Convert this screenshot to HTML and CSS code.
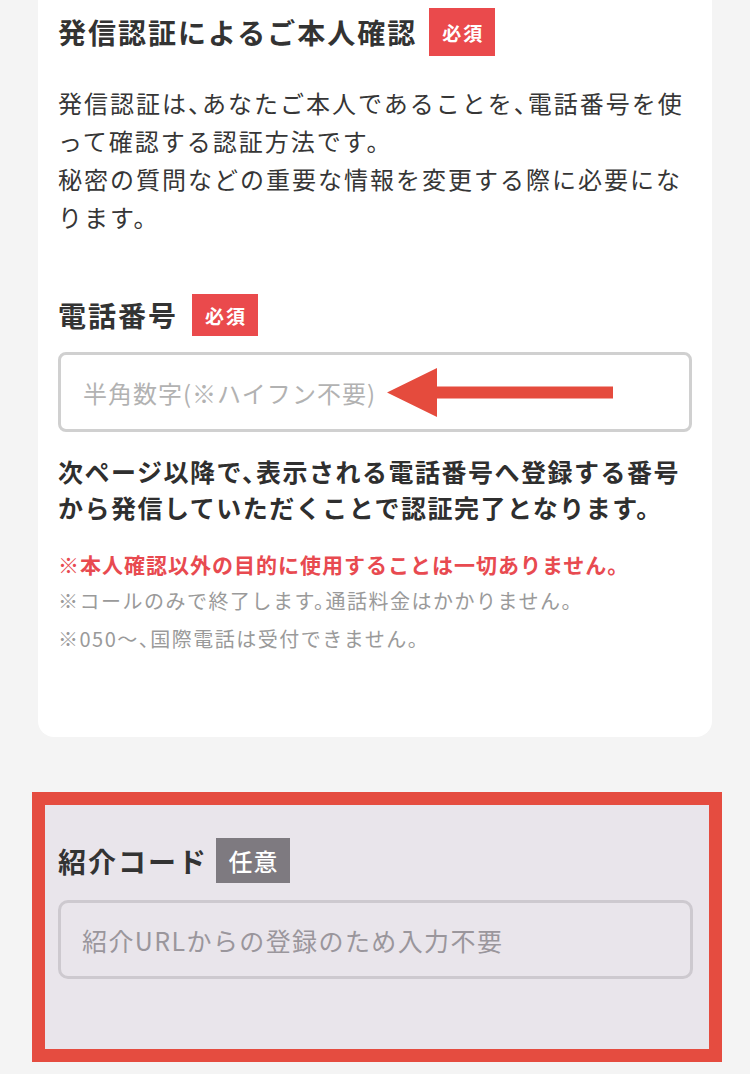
FILE: index.html
```html
<!DOCTYPE html>
<html lang="ja">
<head>
<meta charset="utf-8">
<title>発信認証</title>
<link rel="stylesheet" href="styles.css">
</head>
<body>
<main class="page">
  <section class="card">
    <div class="label-row label-row--top">
      <h2 class="label">発信認証によるご本人確認</h2>
      <span class="badge badge--req badge--tall">必須</span>
    </div>
    <p class="lead">発信認証は、あなたご本人であることを、電話番号を使って確認する認証方法です。<br>秘密の質問などの重要な情報を変更する際に必要になります。</p>

    <div class="label-row label-row--phone">
      <h3 class="label">電話番号</h3>
      <span class="badge badge--req">必須</span>
    </div>
    <div class="field">
      <input class="input input--phone" type="tel" placeholder="半角数字(※ハイフン不要)">
      <svg class="arrow" width="226" height="50" viewBox="0 0 226 50" aria-hidden="true">
        <polygon points="0,24.5 50,0 50,18.5 226,18.5 226,30.5 50,30.5 50,49" fill="#e54b3d"/>
      </svg>
    </div>
    <p class="notice">次ページ以降で、表示される電話番号へ登録する番号から発信していただくことで認証完了となります。</p>
    <ul class="notes">
      <li class="note note--red">※本人確認以外の目的に使用することは一切ありません。</li>
      <li class="note">※コールのみで終了します。通話料金はかかりません。</li>
      <li class="note">※050〜、国際電話は受付できません。</li>
    </ul>
  </section>

  <section class="referral">
    <div class="label-row label-row--ref">
      <h3 class="label">紹介コード</h3>
      <span class="badge badge--opt">任意</span>
    </div>
    <input class="input input--ref" type="text" placeholder="紹介URLからの登録のため入力不要">
  </section>
</main>
</body>
</html>
```

FILE: styles.css
```css
* {
  box-sizing: border-box;
}

html, body {
  margin: 0;
  padding: 0;
}

body {
  background: #f4f4f4;
  font-family: "Noto Sans CJK JP", "Noto Sans", sans-serif;
  color: #333;
  width: 750px;
  height: 1074px;
  overflow: hidden;
}

.page {
  display: flex;
  flex-direction: column;
}

.card {
  margin: 0 38px;
  background: #ffffff;
  border-radius: 0 0 16px 16px;
  padding: 8px 20px 79px 20px;
}

.label-row {
  display: flex;
  align-items: center;
  gap: 12px;
}

.label-row--phone {
  margin-top: 58px;
  gap: 14px;
}

.label {
  margin: 0;
  font-size: 28px;
  font-weight: 700;
  letter-spacing: 2px;
  line-height: 40px;
  color: #333;
}

.badge {
  display: inline-flex;
  align-items: center;
  justify-content: center;
  color: #fff;
  font-weight: 700;
}

.badge--req {
  background: #ea4a4c;
  width: 66px;
  height: 42px;
  font-size: 19px;
  letter-spacing: 2px;
  padding-left: 2px;
}

.badge--tall {
  height: 48px;
}

.badge--opt {
  background: #7e7a80;
  width: 74px;
  height: 45px;
  font-size: 24px;
  font-weight: 500;
  letter-spacing: 1px;
  padding-left: 1px;
}

.lead,
.notice,
.note {
  font-feature-settings: "halt";
}

.lead {
  margin: 28px 0 0 0;
  font-size: 24px;
  letter-spacing: 2px;
  line-height: 38px;
  color: #363636;
}

.field {
  position: relative;
  margin-top: 16px;
}

.input {
  display: block;
  width: 100%;
  font-family: "Noto Sans CJK JP", "Noto Sans", sans-serif;
  outline: none;
}

.input--phone {
  height: 80px;
  border: 3px solid #d0d0d0;
  border-radius: 8px;
  background: #fff;
  padding: 0 22px;
  font-size: 24px;
  letter-spacing: 1px;
}

.input--phone::placeholder {
  color: #b2b2b2;
}

.arrow {
  position: absolute;
  left: 329px;
  top: 16px;
}

.notice {
  margin: 21px 0 0 0;
  font-size: 25px;
  font-weight: 700;
  letter-spacing: 1.5px;
  line-height: 36px;
  color: #2f2f2f;
}

.notes {
  list-style: none;
  margin: 21px 0 0 0;
  padding: 0;
}

.note {
  font-size: 20px;
  letter-spacing: 1.5px;
  line-height: 38px;
  color: #9a9a9a;
}

.note--red {
  color: #e84a50;
  font-size: 21px;
  font-weight: 700;
  letter-spacing: 1px;
  line-height: 36px;
}

.referral {
  margin: 55px 0 0 32px;
  width: 690px;
  border: 13px solid #e54c40;
  background: #e9e5eb;
  padding: 33px 16px 70px 13px;
}

.label-row--ref {
  gap: 8px;
}

.input--ref {
  margin-top: 17px;
  height: 79px;
  border: 3px solid #cdc9cf;
  border-radius: 10px;
  background: transparent;
  padding: 0 21px;
  font-size: 25px;
  letter-spacing: 1.4px;
}

.input--ref::placeholder {
  color: #9a969c;
}
```
